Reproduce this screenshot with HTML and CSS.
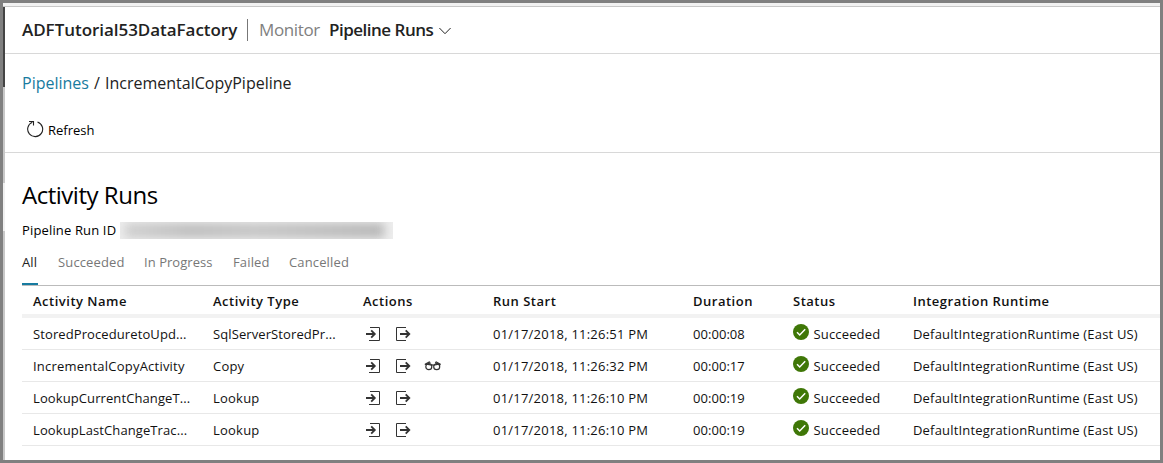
FILE: index.html
```html
<!DOCTYPE html>
<html lang="en">
<head>
<meta charset="utf-8">
<title>Pipeline Runs</title>
<link rel="stylesheet" href="styles.css">
</head>
<body>
<svg class="defs" aria-hidden="true">
  <symbol id="input" viewBox="0 0 16 16"><path d="M5 1.5h9.5v13H4" fill="none" stroke="#333"/><path d="M1 8h8.500M6.200 4.400 9.800 8l-3.600 3.600" fill="none" stroke="#333" stroke-width="1.800"/></symbol>
  <symbol id="output" viewBox="0 0 16 16"><path d="M11 1.5H1.5v13H11" fill="none" stroke="#333"/><path d="M5 8h9M10.700 4.400 14.300 8l-3.600 3.600" fill="none" stroke="#333" stroke-width="1.800"/></symbol>
  <symbol id="glasses" viewBox="0 0 18 12"><g fill="none" stroke="#333" stroke-width="1.200"><ellipse cx="4.800" cy="6.700" rx="3" ry="3"/><ellipse cx="12.700" cy="6.700" rx="3" ry="3"/><path d="M.8 4.600 2.600 4.200 7.700 5.200q1-.8 2 0l5.200-1 1.800.4M1 4.200 5.300 2l1 .7M16.500 4.200 12.200 2l-1 .7"/></g></symbol>
  <symbol id="ok" viewBox="0 0 16 16"><circle cx="8" cy="8" r="8" fill="#3f7707"/><path d="M4 8.300 6.700 11l5.500-5.700" fill="none" stroke="#fff" stroke-width="1.500"/></symbol>
</svg>
<div class="window">
  <div class="rail"><div class="rail-dark"></div><div class="rail-mid"></div><div class="rail-light"></div><div class="rail-rest"></div></div>
  <main class="main">
    <header class="header">
      <span class="factory">ADFTutorial53DataFactory</span>
      <span class="divider"></span>
      <span class="monitor">Monitor</span>
      <span class="current">Pipeline Runs</span>
      <svg class="chevron" viewBox="0 0 12 8"><path d="M.4 1 6 6.700 11.600 1" fill="none" stroke="#222"/></svg>
    </header>
    <nav class="crumbs"><a class="link">Pipelines</a><span class="slash">/</span><span>IncrementalCopyPipeline</span></nav>
    <div class="toolbar">
      <svg class="refresh-icon" viewBox="0 0 17 18"><path d="M5.300 2.200A7.500 7.500 0 1 0 10.500 2M2 1.500h4.500v4" fill="none" stroke="#222" stroke-width="1.100"/></svg>
      <span>Refresh</span>
    </div>
    <section class="content">
      <h1 class="heading">Activity Runs</h1>
      <div class="run-id"><span>Pipeline Run ID</span><span class="redacted"><span class="smudge"></span></span></div>
      <div class="tabs">
        <span class="tab active">All</span><span class="tab t-succeeded">Succeeded</span><span class="tab t-progress">In Progress</span><span class="tab t-failed">Failed</span><span class="tab">Cancelled</span>
      </div>
      <div class="row head"><span>Activity Name</span><span>Activity Type</span><span>Actions</span><span>Run Start</span><span>Duration</span><span>Status</span><span>Integration Runtime</span></div>
      <div class="row"><span class="trim">StoredProceduretoUpd...</span><span class="trim">SqlServerStoredPr...</span><span class="actions"><svg><use href="#input"/></svg><svg><use href="#output"/></svg></span><span>01/17/2018, 11:26:51 PM</span><span class="time">00:00:08</span><span class="status"><svg><use href="#ok"/></svg>Succeeded</span><span class="runtime">DefaultIntegrationRuntime (East US)</span></div>
      <div class="row"><span>IncrementalCopyActivity</span><span>Copy</span><span class="actions"><svg><use href="#input"/></svg><svg><use href="#output"/></svg><svg class="glasses"><use href="#glasses"/></svg></span><span>01/17/2018, 11:26:32 PM</span><span class="time">00:00:17</span><span class="status"><svg><use href="#ok"/></svg>Succeeded</span><span class="runtime">DefaultIntegrationRuntime (East US)</span></div>
      <div class="row"><span class="trim">LookupCurrentChangeT...</span><span>Lookup</span><span class="actions"><svg><use href="#input"/></svg><svg><use href="#output"/></svg></span><span>01/17/2018, 11:26:10 PM</span><span class="time">00:00:19</span><span class="status"><svg><use href="#ok"/></svg>Succeeded</span><span class="runtime">DefaultIntegrationRuntime (East US)</span></div>
      <div class="row"><span class="trim">LookupLastChangeTrac...</span><span>Lookup</span><span class="actions"><svg><use href="#input"/></svg><svg><use href="#output"/></svg></span><span>01/17/2018, 11:26:10 PM</span><span class="time">00:00:19</span><span class="status"><svg><use href="#ok"/></svg>Succeeded</span><span class="runtime">DefaultIntegrationRuntime (East US)</span></div>
    </section>
  </main>
</div>
</body>
</html>
```
FILE: styles.css
```css
* { box-sizing: border-box; }
body { margin: 0; font: 13px "Open Sans", sans-serif; color: #111; white-space: nowrap; overflow: hidden; }
svg { display: block; flex: none; }
.defs { display: none; }
.window { width: 1163px; height: 463px; border: 3px solid #808080; background: #fff; display: flex; box-shadow: inset 0 3px #f2f2f2, inset 0 4px #c8c8c8; padding-top: 4px; }
.rail { width: 2px; display: flex; flex-direction: column; }
.rail-dark { height: 80px; background: #444; }
.rail-mid { height: 96px; background: #c8c8c8; }
.rail-light { height: 48px; background: #f0f0f0; }
.rail-rest { flex: 1; background: #c8c8c8; }
.main { flex: 1; min-width: 0; }
.header { height: 47px; border-bottom: 1px solid #d8d8d8; padding-left: 17px; display: flex; align-items: center; font-size: 17px; line-height: 46px; color: #222; }
.factory { width: 225px; font-weight: 600; letter-spacing: -.04px; }
.divider { width: 1px; height: 22px; background: #777; margin-right: 11px; }
.monitor { width: 70px; color: #808080; letter-spacing: -.38px; }
.current { font-weight: 600; letter-spacing: -.5px; width: 110px; }
.chevron { width: 12px; height: 8px; margin-top: 2px; }
.crumbs { padding-left: 17px; height: 58px; line-height: 58px; font-size: 16px; display: flex; color: #222; }
.link { color: #177ba0; width: 72px; }
.slash { width: 11px; }
.toolbar { height: 41px; border-bottom: 1px solid #d8d8d8; padding: 0 0 4px 22px; display: flex; align-items: center; gap: 4px; color: #000; }
.refresh-icon { width: 17px; height: 18px; margin-top: -3px; }
.content { padding-left: 17px; }
.heading { margin: 26px 0 0; font-size: 24px; line-height: 32px; font-weight: 400; letter-spacing: -.48px; color: #000; }
.run-id { margin-top: 9px; height: 20px; line-height: 20px; display: flex; align-items: center; color: #000; letter-spacing: .15px; }
.run-id > :first-child { width: 98px; }
.redacted { width: 273px; height: 17px; background: #ededed; overflow: hidden; margin-top: 1px; }
.smudge { display: block; height: 15px; margin: 1px 9px 0 5px; background: linear-gradient(90deg, #d0d0d0, #bfbfbf 25%, #c6c6c6 50%, #b8b8b8); filter: blur(5px); }
.tabs { height: 46px; border-bottom: 1px solid #bbb; display: flex; line-height: 44px; color: #777; letter-spacing: .14px; }
.active { width: 16px; height: 45px; color: #222; margin-right: 20px; box-shadow: inset 0 -2px #177ba0; }
.t-succeeded { width: 86px; }
.t-progress { width: 89px; letter-spacing: .05px; }
.t-failed { width: 56px; }
.row { display: grid; grid-template-columns: 180px 150px 130px 200px 100px 120px 1fr; padding-left: 11px; height: 32px; line-height: 32px; border-bottom: 1px solid #e8e8e8; letter-spacing: .22px; }
.trim { letter-spacing: .1px; }
.time { letter-spacing: .05px; }
.runtime { letter-spacing: .18px; }
.head { line-height: 31px; border-bottom: 4px solid #f2f2f2; font-weight: 600; letter-spacing: .5px; }
.actions { display: flex; gap: 14px; padding: 8px 0 0 2px; }
.actions svg { width: 16px; height: 16px; }
.actions .glasses { width: 18px; height: 12px; margin: 2px 0 0 -1px; }
.status { display: flex; gap: 4.5px; letter-spacing: .16px; }
.status svg { width: 16px; height: 16px; margin-top: 6px; }
```
